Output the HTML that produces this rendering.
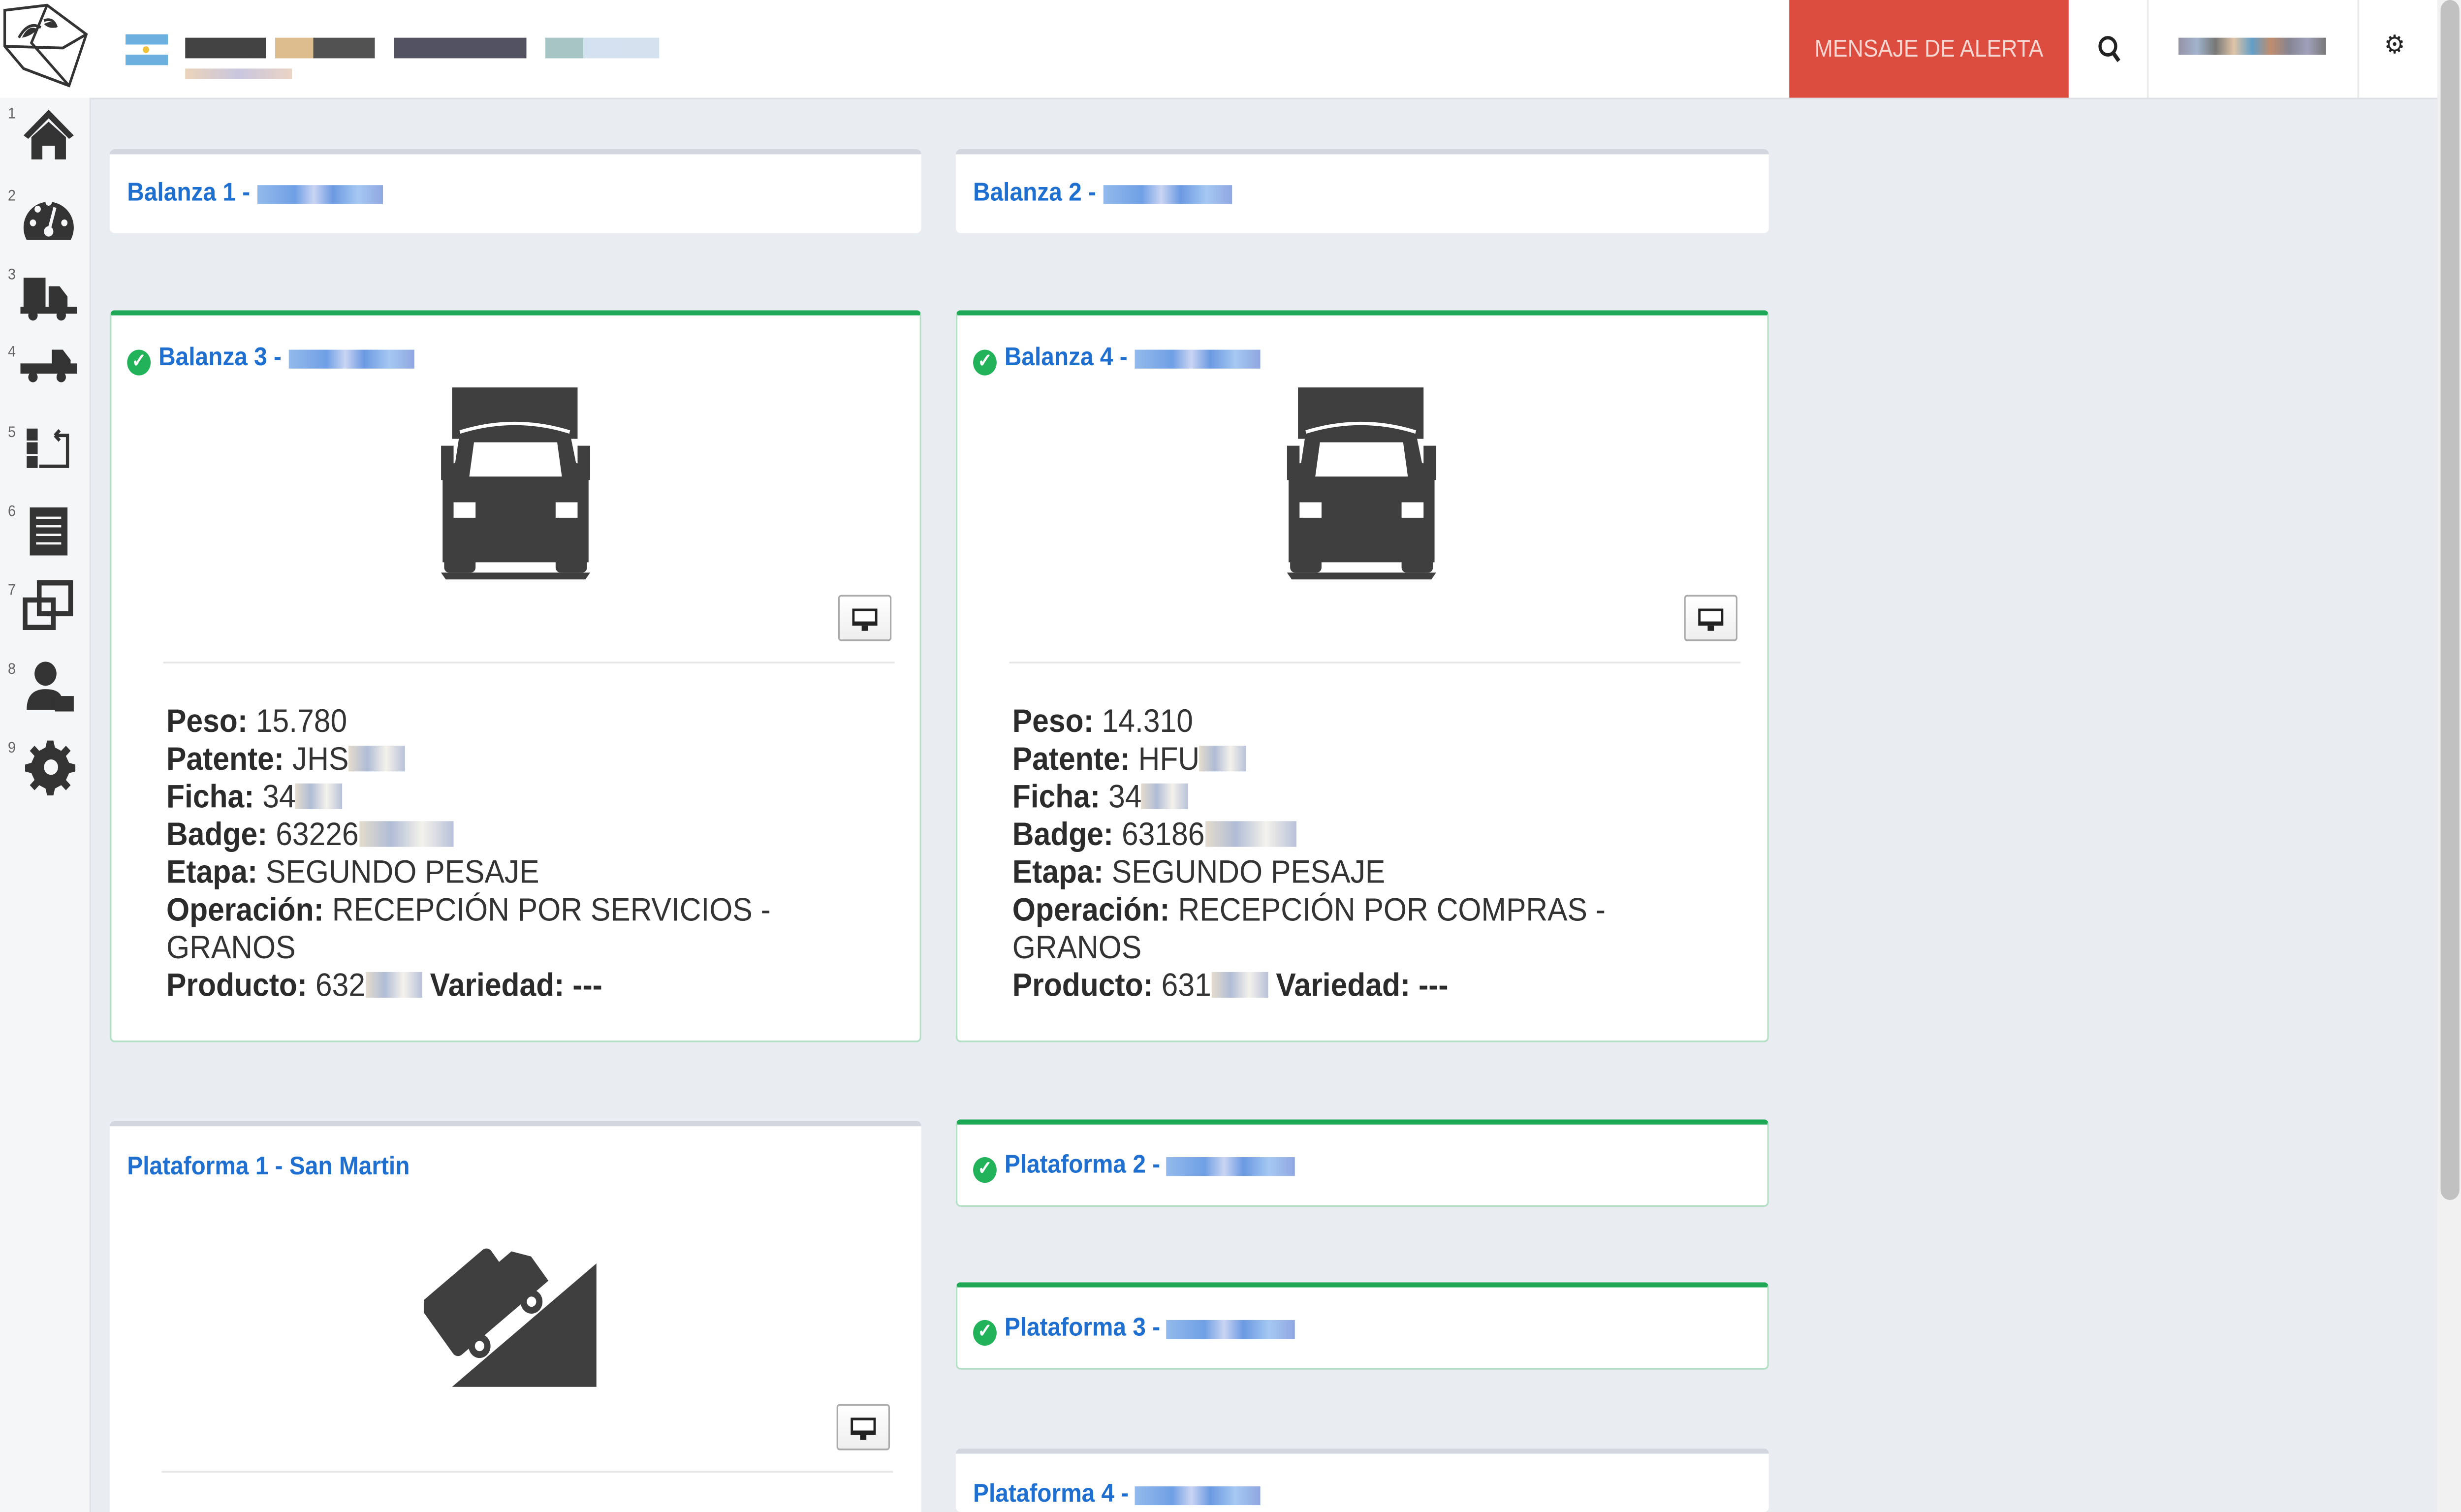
<!DOCTYPE html>
<html><head><meta charset="utf-8"><style>
html,body{margin:0;padding:0;overflow:hidden}
body{width:100vw;height:100vh;background:#e9edf1;font-family:"Liberation Sans",Arial,sans-serif;position:relative}
#s{transform:scale(3.4847);transform-origin:0 0;position:absolute;left:0;top:0;width:1568px;height:882px;overflow:hidden;background:#e9edf1}
.a{position:absolute}
.hdr{left:0;top:0;width:1553px;height:57px;background:#fff;border-bottom:1px solid #dde1e6}
.side{left:0;top:57px;width:57px;height:825px;background:#f5f6f8;border-right:1px solid #dfe3e8}
.num{position:absolute;left:5px;font-size:9px;color:#666}
.card{position:absolute;background:#fff;border-top:3px solid #d2d6de;border-radius:3px;box-sizing:border-box}
.card.g{border-top:3px solid #1fa855;border-left:1px solid #b3e0c5;border-right:1px solid #b3e0c5;border-bottom:1px solid #b3e0c5}
.t{position:absolute;left:11px;font-size:15px;font-weight:bold;color:#1e6fd0;white-space:nowrap}
.blur{display:inline-block;height:11px;vertical-align:middle;background:linear-gradient(90deg,#6fa3e6,#3f7fdc 30%,#b8c6ee 45%,#3a78d8 60%,#87b6ee 80%,#6b8ad8);opacity:.75}
.ck{display:inline-block;width:15px;height:15px;border-radius:50%;background:#22b35a;color:#fff;font-size:11px;line-height:15px;text-align:center;vertical-align:-1px;margin-right:5px}
.info{position:absolute;left:35px;font-size:19px;line-height:22px;color:#333;width:440px}
.info b{color:#2b2b2b}
.bl{display:inline-block;width:36px;height:15px;background:linear-gradient(90deg,#d9cdb8,#8ea0c4,#f0ece3,#9aa7c9);vertical-align:-1px;opacity:.7}
.btn{position:absolute;width:34px;height:27px;box-sizing:border-box;border:1px solid #aaa;border-radius:2px;background:linear-gradient(#fff,#eee)}
.hr{position:absolute;height:1px;background:#e6e6e6}
</style></head><body><div id="s">
<div class="a hdr"></div>
<svg class="a" style="left:0;top:0" width="57" height="57" viewBox="0 0 57 57"><g fill="none" stroke="#333" stroke-width="1.6"><path d="M3 6 L30 3 L55 20 L44 50 L15 40 L3 27 Z"/><path d="M30 3 L20 25 L44 50 M3 27 L40 28 L55 20"/><path d="M12 22 q6-10 14-6 M28 12 q6-2 8 4"/></g><path d="M14 22 q4-8 10-5 q-4 4-10 5z M28 14 q6-3 8 2 q-5 1-8-2z" fill="#333"/></svg>
<div class="a" style="left:80px;top:20px;width:27px;height:18px;background:linear-gradient(#6cb0e0 0 33%,#fff 33% 66%,#6cb0e0 66%)"><div style="position:absolute;left:11px;top:7px;width:4px;height:4px;border-radius:50%;background:#f2c13b"></div></div>
<div class="a" style="left:118px;top:22px;width:302px;height:12px;background:linear-gradient(90deg,#222 0 17%,#fff 17% 19%,#d7b07a 19% 27%,#333 27% 40%,#fff 40% 44%,#334 44% 72%,#fff 72% 76%,#9bb 76% 84%,#cde 84% 100%);opacity:.85"></div>
<div class="a" style="left:118px;top:40px;width:68px;height:6px;background:linear-gradient(90deg,#e6c9a8,#bcb8d8,#e5c9b6);opacity:.8"></div>
<div class="a" style="left:1140px;top:0;width:178px;height:57px;background:#dc4c3f;color:#f7d5d0;font-size:14px;line-height:57px;text-align:center">MENSAJE DE ALERTA</div>
<svg class="a" style="left:1336px;top:20px" width="16" height="17" viewBox="0 0 16 17"><circle cx="7" cy="7" r="5" fill="none" stroke="#222" stroke-width="2"/><path d="M10.5 11 L14 15.5" stroke="#222" stroke-width="2.4"/></svg>
<div class="a" style="left:1368px;top:0;width:1px;height:57px;background:#e8e8e8"></div>
<div class="a" style="left:1388px;top:22px;width:94px;height:10px;background:linear-gradient(90deg,#7b7890,#8aa0c0,#555,#d8b690,#3a86bb,#b07048,#667,#88a,#555);opacity:.8"></div>
<div class="a" style="left:1502px;top:0;width:1px;height:57px;background:#e8e8e8"></div>
<div class="a" style="left:1519px;top:17px;font-size:15px;color:#222">⚙</div>
<div class="a" style="left:1553px;top:0;width:15px;height:882px;background:#f1f1f1"></div>
<div class="a" style="left:1555px;top:0;width:12px;height:700px;background:#c1c1c1;border-radius:6px"></div>
<div class="a side">
<span class="num" style="top:4px">1</span><span class="num" style="top:52px">2</span><span class="num" style="top:98px">3</span><span class="num" style="top:143px">4</span><span class="num" style="top:190px">5</span><span class="num" style="top:236px">6</span><span class="num" style="top:282px">7</span><span class="num" style="top:328px">8</span><span class="num" style="top:374px">9</span>
</div>
<svg class="a" style="left:13px;top:62px" width="36" height="420" viewBox="0 0 36 420" fill="#333">
<path d="M18 2 L2 17 L5 19 L18 7 L31 19 L34 17 Z M7 18 L7 31 L14 31 L14 23 L22 23 L22 31 L29 31 L29 18 L18 9 Z"/>
<path d="M4 78 A16 15 0 1 1 32 78 Z"/><g fill="#f5f6f8"><circle cx="8" cy="68" r="2"/><circle cx="11" cy="60" r="2"/><circle cx="18" cy="56" r="2"/><circle cx="28" cy="68" r="2"/><circle cx="18" cy="73" r="3"/></g><path d="M18 73 L22 59" stroke="#f5f6f8" stroke-width="2"/>
<path d="M2 100 h14 v17 h-14z M18 105 h7 l5 6 v7 h-12z M0 117 h36 v4 h-36z"/><circle cx="8" cy="122" r="3"/><circle cx="26" cy="122" r="3"/>
<path d="M0 150 h36 v6 h-36z M20 142 h7 l5 6 v3 h-12z"/><circle cx="8" cy="158" r="3"/><circle cx="26" cy="158" r="3"/>
<path d="M4 188 h7 v7 h-7z M4 196 h7 v7 h-7z M4 204 h7 v7 h-7z"/><path d="M12 210 h18 v-18 h-8 M22 192 l3-3 M22 192 l3 3" fill="none" stroke="#333" stroke-width="2"/>
<path d="M6 234 h24 v28 h-24z"/><g stroke="#f5f6f8" stroke-width="1.3"><path d="M10 240h16 M10 245h16 M10 250h16 M10 255h16"/></g>
<path d="M12 278 h20 v18 h-20z M3 288 h18 v16 h-18z" fill="none" stroke="#333" stroke-width="3"/>
<circle cx="16" cy="331" r="7"/><path d="M4 352 q0-12 12-12 q8 0 10 4 v8z"/><path d="M22 344 h12 v9 h-12z"/>
<path d="M18 370 l3 0 1 4 4 2 3-3 3 3-3 3 2 4 4 1 v4 l-4 1-2 4 3 3-3 3-3-3-4 2-1 4 h-4 l-1-4-4-2-3 3-3-3 3-3-2-4-4-1 v-4 l4-1 2-4-3-3 3-3 3 3 4-2 1-4z"/><circle cx="19.5" cy="385.5" r="4.5" fill="#f5f6f8"/>
</svg>
<div class="card" style="left:70px;top:87px;width:517px;height:49px"><div class="t" style="top:14px">Balanza 1 - <span class="blur" style="width:80px"></span></div></div>
<div class="card" style="left:609px;top:87px;width:518px;height:49px"><div class="t" style="top:14px">Balanza 2 - <span class="blur" style="width:82px"></span></div></div>

<div class="card g" style="left:70px;top:181px;width:517px;height:427px">
<div class="t" style="top:16px;left:10px"><span class="ck">✓</span>Balanza 3 - <span class="blur" style="width:80px"></span></div>
<svg class="a" style="left:210px;top:42px" width="95" height="113" viewBox="0 0 95 113" fill="#3f3f3f"><path d="M7 0 h80 v30 h-80z"/><path d="M12 26 q35-10 70 0 l4 18 q8 2 8 10 v48 h-93 v-48 q0-8 8-10z"/><path d="M0 34 h8 v20 h-8z M87 34 h8 v20 h-8z"/><rect x="2" y="98" width="20" height="10" rx="3"/><rect x="73" y="98" width="20" height="10" rx="3"/><path d="M0 108 h95 l-3 4 h-89z"/><path d="M21 32 h53 l3 20 h-59z M8 67 h14 v9 h-14z M73 67 h14 v9 h-14z" fill="#fff"/><path d="M12 26 q35-10 70 0" fill="none" stroke="#fff" stroke-width="2"/></svg>
<div class="btn" style="left:463px;top:163px"><svg width="32" height="25" viewBox="0 0 32 25"><path d="M8 7 h16 v10 h-16z" fill="#222"/><path d="M9.5 8.5 h13 v6 h-13z" fill="#fff"/><path d="M14 17 h4 v3 h-4z" fill="#222"/></svg></div>
<div class="hr" style="left:33px;top:202px;width:466px"></div>
<div class="info" style="top:227px"><b>Peso:</b> 15.780<br><b>Patente:</b> JHS<span class="bl"></span><br><b>Ficha:</b> 34<span class="bl" style="width:30px"></span><br><b>Badge:</b> 63226<span class="bl" style="width:60px"></span><br><b>Etapa:</b> SEGUNDO PESAJE<br><b>Operación:</b> RECEPCIÓN POR SERVICIOS - GRANOS<br><b>Producto:</b> 632<span class="bl"></span> <b>Variedad: ---</b></div>
</div>

<div class="card g" style="left:609px;top:181px;width:518px;height:427px">
<div class="t" style="top:16px;left:10px"><span class="ck">✓</span>Balanza 4 - <span class="blur" style="width:80px"></span></div>
<svg class="a" style="left:210px;top:42px" width="95" height="113" viewBox="0 0 95 113" fill="#3f3f3f"><path d="M7 0 h80 v30 h-80z"/><path d="M12 26 q35-10 70 0 l4 18 q8 2 8 10 v48 h-93 v-48 q0-8 8-10z"/><path d="M0 34 h8 v20 h-8z M87 34 h8 v20 h-8z"/><rect x="2" y="98" width="20" height="10" rx="3"/><rect x="73" y="98" width="20" height="10" rx="3"/><path d="M0 108 h95 l-3 4 h-89z"/><path d="M21 32 h53 l3 20 h-59z M8 67 h14 v9 h-14z M73 67 h14 v9 h-14z" fill="#fff"/><path d="M12 26 q35-10 70 0" fill="none" stroke="#fff" stroke-width="2"/></svg>
<div class="btn" style="left:463px;top:163px"><svg width="32" height="25" viewBox="0 0 32 25"><path d="M8 7 h16 v10 h-16z" fill="#222"/><path d="M9.5 8.5 h13 v6 h-13z" fill="#fff"/><path d="M14 17 h4 v3 h-4z" fill="#222"/></svg></div>
<div class="hr" style="left:33px;top:202px;width:466px"></div>
<div class="info" style="top:227px"><b>Peso:</b> 14.310<br><b>Patente:</b> HFU<span class="bl" style="width:30px"></span><br><b>Ficha:</b> 34<span class="bl" style="width:30px"></span><br><b>Badge:</b> 63186<span class="bl" style="width:58px"></span><br><b>Etapa:</b> SEGUNDO PESAJE<br><b>Operación:</b> RECEPCIÓN POR COMPRAS - GRANOS<br><b>Producto:</b> 631<span class="bl"></span> <b>Variedad: ---</b></div>
</div>

<div class="card" style="left:70px;top:654px;width:517px;height:240px">
<div class="t" style="top:15px">Plataforma 1 - San Martin</div>
<svg class="a" style="left:200px;top:60px" width="112" height="96" viewBox="0 0 112 96" fill="#3f3f3f"><path d="M18 92 L110 20 V92 Z"/><g transform="translate(44 40) rotate(-38)"><rect x="-40" y="-26" width="56" height="40" rx="4"/><path d="M14 -14 h12 l8 10 v18 h-20z"/><circle cx="-24" cy="17" r="7"/><circle cx="18" cy="17" r="7"/><circle cx="-24" cy="17" r="3" fill="#fff"/><circle cx="18" cy="17" r="3" fill="#fff"/></g></svg>
<div class="btn" style="left:463px;top:162px"><svg width="32" height="25" viewBox="0 0 32 25"><path d="M8 7 h16 v10 h-16z" fill="#222"/><path d="M9.5 8.5 h13 v6 h-13z" fill="#fff"/><path d="M14 17 h4 v3 h-4z" fill="#222"/></svg></div>
<div class="hr" style="left:33px;top:201px;width:466px"></div>
</div>

<div class="card g" style="left:609px;top:653px;width:518px;height:51px"><div class="t" style="top:15px;left:10px"><span class="ck">✓</span>Plataforma 2 - <span class="blur" style="width:82px"></span></div></div>
<div class="card g" style="left:609px;top:748px;width:518px;height:51px"><div class="t" style="top:15px;left:10px"><span class="ck">✓</span>Plataforma 3 - <span class="blur" style="width:82px"></span></div></div>
<div class="card" style="left:609px;top:845px;width:518px;height:37px"><div class="t" style="top:15px">Plataforma 4 - <span class="blur" style="width:80px"></span></div></div>
</div>
<script>
(function(){var s=document.getElementById('s');function f(){var w=window.innerWidth||5464,h=window.innerHeight||3072;s.style.transform='scale('+(w/1568)+','+(h/882)+')';}f();window.addEventListener('resize',f);})();
</script>
</body></html>
